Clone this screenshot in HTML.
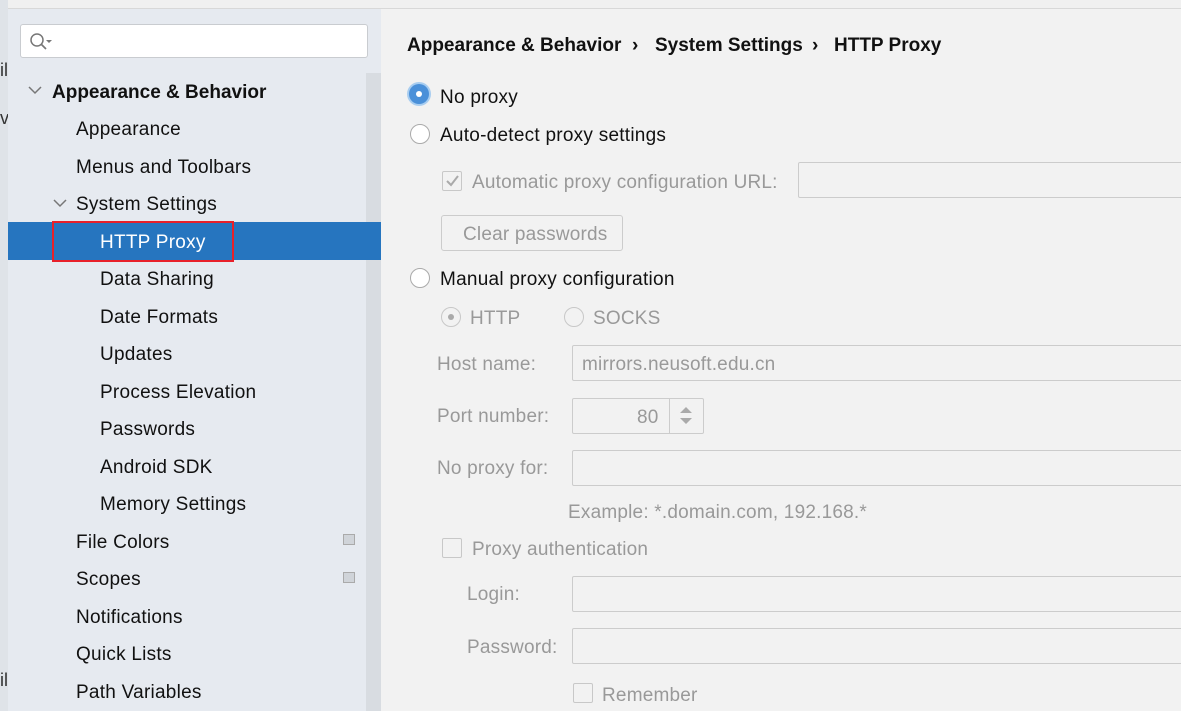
<!DOCTYPE html>
<html><head><style>
body{margin:0;width:1181px;height:711px;overflow:hidden;background:#f2f2f2;font-family:"Liberation Sans","Noto Sans CJK SC",sans-serif;position:relative}
.a{position:absolute;white-space:nowrap}
#left{position:absolute;left:0;top:0;width:8px;height:711px;background:#dfe3e8}
#side{position:absolute;left:8px;top:9px;width:373px;height:702px;background:#e6eaf0}
#topline{position:absolute;left:0;top:0;width:1181px;height:8px;background:#f0f0f0;border-bottom:1px solid #d8d8d8}
.it{font-size:19px;letter-spacing:0.25px;color:#111;transform:translateY(-42%)}
.g{color:#999;font-size:19px;letter-spacing:0.2px;transform:translateY(-42%)}
.rad{position:absolute;width:20px;height:20px;border-radius:50%;border:1px solid #aaa;background:#fff;box-sizing:border-box}
.box{position:absolute;border:1px solid #ccc;background:#f2f2f2;box-sizing:border-box;border-radius:2px}
.cb{position:absolute;width:20px;height:20px;border:1px solid #c8c8c8;background:#f2f2f2;box-sizing:border-box;border-radius:2px}
</style></head><body>
<div id="topline"></div>
<div id="left"></div>
<div class="a" style="left:0;top:60px;font-size:18px;color:#333">il</div>
<div class="a" style="left:0;top:108px;font-size:18px;color:#333">v</div>
<div class="a" style="left:0;top:670px;font-size:18px;color:#333">il</div>
<div id="side"></div>
<div class="a" style="left:366px;top:73px;width:15px;height:638px;background:#d8dce1"></div>
<div class="a" style="left:20px;top:24px;width:348px;height:34px;background:#fff;border:1px solid #c9ccd0;border-radius:3px;box-sizing:border-box"></div>
<svg class="a" style="left:28px;top:31px" width="26" height="22"><circle cx="9" cy="9" r="6" fill="none" stroke="#777" stroke-width="1.5"/><line x1="13" y1="13" x2="18" y2="18" stroke="#777" stroke-width="1.7"/><path d="M18 9h6l-3 3z" fill="#777"/></svg>
<svg class="a" style="left:28px;top:85px" width="14" height="10"><path d="M1 2l6 6 6-6" fill="none" stroke="#777" stroke-width="1.5"/></svg>
<div class="a it" style="left:52px;top:91px;font-weight:bold;letter-spacing:0">Appearance &amp; Behavior</div>
<div class="a it" style="left:76px;top:128px">Appearance</div>
<div class="a it" style="left:76px;top:166px">Menus and Toolbars</div>
<svg class="a" style="left:53px;top:198px" width="14" height="10"><path d="M1 2l6 6 6-6" fill="none" stroke="#777" stroke-width="1.5"/></svg>
<div class="a it" style="left:76px;top:203px">System Settings</div>
<div class="a" style="left:8px;top:222px;width:373px;height:38px;background:#2675bf"></div>
<div class="a" style="left:52px;top:221px;width:178px;height:37px;border:2px solid #e8202a"></div>
<div class="a it" style="left:100px;top:241px;color:#fff">HTTP Proxy</div>
<div class="a it" style="left:100px;top:278px">Data Sharing</div>
<div class="a it" style="left:100px;top:316px">Date Formats</div>
<div class="a it" style="left:100px;top:353px">Updates</div>
<div class="a it" style="left:100px;top:391px">Process Elevation</div>
<div class="a it" style="left:100px;top:428px">Passwords</div>
<div class="a it" style="left:100px;top:466px">Android SDK</div>
<div class="a it" style="left:100px;top:503px">Memory Settings</div>
<div class="a it" style="left:76px;top:541px">File Colors</div>
<div class="a it" style="left:76px;top:578px">Scopes</div>
<div class="a it" style="left:76px;top:616px">Notifications</div>
<div class="a it" style="left:76px;top:653px">Quick Lists</div>
<div class="a it" style="left:76px;top:691px">Path Variables</div>
<div class="a" style="left:343px;top:534px;width:12px;height:11px;border:1px solid #aaa;box-sizing:border-box;background:#d0d4d9"></div>
<div class="a" style="left:343px;top:572px;width:12px;height:11px;border:1px solid #aaa;box-sizing:border-box;background:#d0d4d9"></div>

<div class="a it" style="left:407px;top:44px;font-weight:bold;letter-spacing:0">Appearance &amp; Behavior</div>
<div class="a it" style="left:632px;top:44px;font-weight:bold;letter-spacing:0">›</div>
<div class="a it" style="left:655px;top:44px;font-weight:bold;letter-spacing:0">System Settings</div>
<div class="a it" style="left:812px;top:44px;font-weight:bold;letter-spacing:0">›</div>
<div class="a it" style="left:834px;top:44px;font-weight:bold;letter-spacing:0">HTTP Proxy</div>

<div class="rad" style="left:409px;top:84px;border:none;background:#4a90d9;box-shadow:0 0 0 2px #a8cdf0"></div>
<div class="a" style="left:416px;top:91px;width:6px;height:6px;border-radius:50%;background:#fff"></div>
<div class="a it" style="left:440px;top:96px">No proxy</div>
<div class="rad" style="left:410px;top:124px"></div>
<div class="a it" style="left:440px;top:134px">Auto-detect proxy settings</div>
<div class="cb" style="left:442px;top:171px"></div>
<svg class="a" style="left:444px;top:173px" width="16" height="16"><path d="M3 8l4 4 7-9" fill="none" stroke="#aaa" stroke-width="2"/></svg>
<div class="a g" style="left:472px;top:181px">Automatic proxy configuration URL:</div>
<div class="box" style="left:798px;top:162px;width:390px;height:36px"></div>
<div class="box" style="left:441px;top:215px;width:182px;height:36px;border-radius:3px"></div>
<div class="a g" style="left:463px;top:233px">Clear passwords</div>
<div class="rad" style="left:410px;top:268px"></div>
<div class="a it" style="left:440px;top:278px">Manual proxy configuration</div>
<div class="rad" style="left:441px;top:307px;border-color:#c8c8c8;background:#f2f2f2"></div>
<div class="a" style="left:448px;top:314px;width:6px;height:6px;border-radius:50%;background:#aaa"></div>
<div class="a g" style="left:470px;top:317px">HTTP</div>
<div class="rad" style="left:564px;top:307px;border-color:#c8c8c8;background:#f2f2f2"></div>
<div class="a g" style="left:593px;top:317px">SOCKS</div>
<div class="a g" style="left:437px;top:363px">Host name:</div>
<div class="box" style="left:572px;top:345px;width:620px;height:36px"></div>
<div class="a g" style="left:582px;top:363px">mirrors.neusoft.edu.cn</div>
<div class="a g" style="left:437px;top:415px">Port number:</div>
<div class="box" style="left:572px;top:398px;width:132px;height:36px"></div>
<div class="a" style="left:669px;top:399px;width:1px;height:34px;background:#ccc"></div>
<div class="a g" style="left:637px;top:416px">80</div>
<svg class="a" style="left:679px;top:405px" width="14" height="22"><path d="M1 8l6-6 6 6z M1 13l6 6 6-6z" fill="#aaa"/></svg>
<div class="a g" style="left:437px;top:467px">No proxy for:</div>
<div class="box" style="left:572px;top:450px;width:620px;height:36px"></div>
<div class="a g" style="left:568px;top:511px">Example: *.domain.com, 192.168.*</div>
<div class="cb" style="left:442px;top:538px"></div>
<div class="a g" style="left:472px;top:548px">Proxy authentication</div>
<div class="a g" style="left:467px;top:593px">Login:</div>
<div class="box" style="left:572px;top:576px;width:620px;height:36px"></div>
<div class="a g" style="left:467px;top:646px">Password:</div>
<div class="box" style="left:572px;top:628px;width:620px;height:36px"></div>
<div class="cb" style="left:573px;top:683px"></div>
<div class="a g" style="left:602px;top:694px">Remember</div>
</body></html>
